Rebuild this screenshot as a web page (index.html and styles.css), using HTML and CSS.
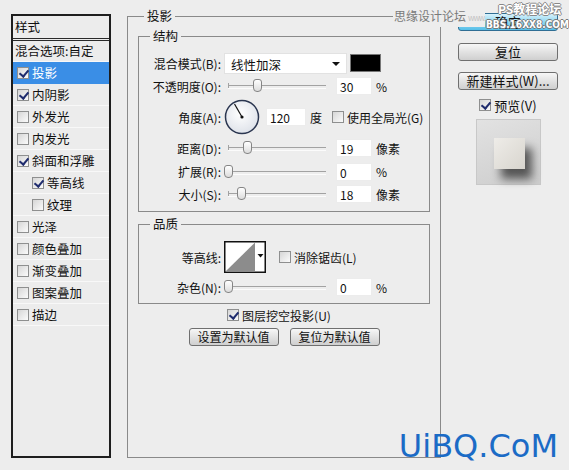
FILE: index.html
```html
<!DOCTYPE html>
<html>
<head>
    <meta charset="UTF-8" />
    <title>图层样式</title>
    <link rel="stylesheet" href="styles.css">
</head>
<body>
    <div class="dialog">
        <div class="styles-list">
            <div class="list-head">样式</div>
            <div class="list-blend">混合选项:自定</div>
            <div class="list-row active"><span class="cb on"></span>投影</div>
            <div class="list-row"><span class="cb on"></span>内阴影</div>
            <div class="list-row"><span class="cb"></span>外发光</div>
            <div class="list-row"><span class="cb"></span>内发光</div>
            <div class="list-row"><span class="cb on"></span>斜面和浮雕</div>
            <div class="list-row sub"><span class="cb on"></span>等高线</div>
            <div class="list-row sub"><span class="cb"></span>纹理</div>
            <div class="list-row"><span class="cb"></span>光泽</div>
            <div class="list-row"><span class="cb"></span>颜色叠加</div>
            <div class="list-row"><span class="cb"></span>渐变叠加</div>
            <div class="list-row"><span class="cb"></span>图案叠加</div>
            <div class="list-row"><span class="cb"></span>描边</div>
        </div>

        <fieldset class="effect">
            <legend>投影</legend>

            <fieldset class="group structure">
                <legend>结构</legend>
                <div class="row r1">
                    <span class="lbl">混合模式(B):</span>
                    <div class="select">线性加深<span class="arrow"></span></div>
                    <div class="swatch"></div>
                </div>
                <div class="row r2">
                    <span class="lbl">不透明度(O):</span>
                    <div class="slider"><span class="thumb" style="left: 29px"></span></div>
                    <div class="num">30</div>
                    <span class="unit">%</span>
                </div>
                <div class="row r3">
                    <span class="lbl">角度(A):</span>
                    <svg class="dial" width="36" height="36" viewBox="0 0 36 36">
                        <defs>
                            <radialGradient id="dialbg" cx="0.45" cy="0.4" r="0.6">
                                <stop offset="0" stop-color="#ffffff"/>
                                <stop offset="1" stop-color="#dfe3ea"/>
                            </radialGradient>
                        </defs>
                        <circle cx="18" cy="18" r="16.5" fill="url(#dialbg)" stroke="#2b3650" stroke-width="1.5"/>
                        <line x1="18" y1="18" x2="10.5" y2="5" stroke="#111" stroke-width="1.2"/>
                        <circle cx="18" cy="18" r="1.6" fill="#111"/>
                    </svg>
                    <div class="num angle">120</div>
                    <span class="unit">度</span>
                    <span class="cb global"></span>
                    <span class="opt">使用全局光(G)</span>
                </div>
                <div class="row r4">
                    <span class="lbl">距离(D):</span>
                    <div class="slider"><span class="thumb" style="left: 19px"></span></div>
                    <div class="num">19</div>
                    <span class="unit">像素</span>
                </div>
                <div class="row r5">
                    <span class="lbl">扩展(R):</span>
                    <div class="slider"><span class="thumb" style="left: 0px"></span></div>
                    <div class="num">0</div>
                    <span class="unit">%</span>
                </div>
                <div class="row r6">
                    <span class="lbl">大小(S):</span>
                    <div class="slider"><span class="thumb" style="left: 13px"></span></div>
                    <div class="num">18</div>
                    <span class="unit">像素</span>
                </div>
            </fieldset>

            <fieldset class="group quality">
                <legend>品质</legend>
                <div class="row q1">
                    <span class="lbl">等高线:</span>
                    <svg class="contour" width="42" height="32" viewBox="0 0 42 32">
                        <rect x="0.75" y="0.75" width="40.5" height="30.5" fill="#fff" stroke="#111" stroke-width="1.5"/>
                        <polygon points="1.5,30.5 31,1.5 31,30.5" fill="#8c8c8c"/>
                        <polygon points="33.5,13 39.5,13 36.5,16.5" fill="#111"/>
                    </svg>
                    <span class="cb anti"></span>
                    <span class="opt">消除锯齿(L)</span>
                </div>
                <div class="row q2">
                    <span class="lbl">杂色(N):</span>
                    <div class="slider"><span class="thumb" style="left: 0px"></span></div>
                    <div class="num">0</div>
                    <span class="unit">%</span>
                </div>
            </fieldset>

            <div class="knockout"><span class="cb on"></span><span class="opt">图层挖空投影(U)</span></div>
            <div class="defaults">
                <button class="btn">设置为默认值</button>
                <button class="btn">复位为默认值</button>
            </div>
        </fieldset>

        <div class="actions">
            <button class="btn big primary">确定</button>
            <button class="btn big">复位</button>
            <button class="btn big">新建样式(W)...</button>
            <div class="preview-check"><span class="cb on"></span><span class="opt">预览(V)</span></div>
            <div class="preview">
                <div class="preview-box"></div>
            </div>
        </div>

        <div class="wm-site">思缘设计论坛<span class="wm-www">www.</span></div>
        <div class="wm-ps">PS教程论坛</div>
        <div class="wm-bbs">BBS.16XX8.COM</div>
        <div class="wm-logo">UiBQ.CoM</div>
    </div>
</body>
</html>
```

FILE: styles.css
```css
* {
    margin: 0;
    padding: 0;
    box-sizing: border-box;
}
body {
    width: 569px;
    height: 470px;
    overflow: hidden;
    background-color: #ededed;
    font-family: "Noto Sans CJK SC", "Liberation Sans", sans-serif;
    font-size: 12px;
    color: #111;
}
.dialog {
    position: relative;
    display: flex;
    align-items: flex-start;
    height: 470px;
    padding-left: 11px;
}

/* left list */
.styles-list {
    width: 100px;
    height: 444px;
    margin-top: 14px;
    border: 2px solid #1e1e1e;
    background-color: #ececec;
}
.list-head {
    height: 25px;
    line-height: 22px;
    padding-left: 2px;
    border-bottom: 3px double #2a2a2a;
    font-size: 12.5px;
}
.list-blend {
    height: 21px;
    line-height: 20px;
    padding-left: 2px;
    font-size: 12.5px;
    border-bottom: 1px solid #f7f7f7;
}
.list-row {
    display: flex;
    align-items: center;
    height: 22px;
    padding-left: 4px;
    font-size: 12.5px;
    border-bottom: 1px solid #f8f8f8;
}
.list-row.sub {
    padding-left: 19px;
}
.list-row.active {
    background-color: #3a8ee6;
    color: #fff;
    border-bottom-color: #3a8ee6;
}
.list-row .cb {
    margin-right: 3px;
}

/* checkbox */
.cb {
    position: relative;
    display: inline-block;
    flex: none;
    width: 12px;
    height: 12px;
    border: 1px solid #8e8f8f;
    background: linear-gradient(135deg, #d6d6d6, #fbfbfb);
}
.cb.on::after {
    content: '';
    position: absolute;
    left: 3px;
    top: 0px;
    width: 4px;
    height: 7px;
    border: solid #1f2c6e;
    border-width: 0 2px 2px 0;
    transform: rotate(40deg);
}

/* group boxes */
fieldset {
    min-width: 0;
    border: 1px solid #8a8a8a;
}
legend {
    line-height: 16px;
    padding: 0 3px;
    font-size: 12.5px;
}
.effect {
    width: 314px;
    height: 450px;
    margin: 8px 0 0 16px;
    padding: 0 10px;
}
.effect > legend {
    margin-left: 6px;
}
.group {
    margin-top: 4px;
    padding: 0;
}
.group > legend {
    margin-left: 11px;
}
.structure {
    padding-top: 8px;
    padding-bottom: 6px;
}
.quality {
    padding-top: 8px;
    padding-bottom: 5px;
}

.row {
    display: flex;
    align-items: center;
}
.r1 { height: 22px; }
.r2 { height: 24px; }
.r3 { height: 38px; }
.r4 { height: 24px; }
.r5 { height: 23px; }
.r6 { height: 22px; }
.q1 { height: 34px; }
.q2 { height: 22px; margin-top: 2px; }

.lbl {
    width: 82px;
    margin-right: 3px;
    text-align: right;
    white-space: nowrap;
}
.select {
    position: relative;
    width: 123px;
    height: 21px;
    line-height: 21px;
    padding-left: 6px;
    background-color: #fff;
    border: 1px solid #e2e2e2;
    font-size: 12.5px;
}
.arrow {
    position: absolute;
    right: 6px;
    top: 8px;
    border-left: 4px solid transparent;
    border-right: 4px solid transparent;
    border-top: 4px solid #111;
}
.swatch {
    width: 31px;
    height: 18px;
    margin-left: 3px;
    background-color: #000;
    border: 1px solid #777;
}

.slider {
    position: relative;
    width: 102px;
    height: 14px;
}
.slider::before {
    content: '';
    position: absolute;
    left: 4px;
    right: 0;
    top: 6px;
    height: 2px;
    border-top: 1px solid #a2a2a2;
    border-bottom: 1px solid #fbfbfb;
}
.slider::after {
    content: '';
    position: absolute;
    left: 4px;
    top: 4px;
    width: 1px;
    height: 5px;
    background-color: #a2a2a2;
}
.thumb {
    position: absolute;
    top: 0;
    z-index: 1;
    width: 9px;
    height: 13px;
    border: 1px solid #858585;
    border-radius: 3px 3px 4px 4px;
    background: linear-gradient(#ffffff, #dcdcdc);
}
.num {
    width: 36px;
    height: 18px;
    line-height: 18px;
    margin-left: 10px;
    padding-left: 3px;
    background-color: #fff;
    border: 1px solid #ececec;
    font-size: 12px;
}
.num.angle {
    width: 40px;
    margin-left: 6px;
}
.unit {
    margin-left: 4px;
    font-size: 12px;
}
.cb.global {
    margin-left: 10px;
}
.opt {
    margin-left: 3px;
    font-size: 12px;
    white-space: nowrap;
}
.dial {
    flex: none;
}
.contour {
    flex: none;
}
.cb.anti {
    margin-left: 13px;
}

.knockout {
    display: flex;
    align-items: center;
    justify-content: center;
    height: 18px;
    margin-top: 2px;
    padding-right: 10px;
}
.defaults {
    display: flex;
    justify-content: center;
    gap: 11px;
    margin-top: 4px;
}
.btn {
    width: 90px;
    height: 18px;
    line-height: 16px;
    border: 1px solid #6f6f6f;
    border-radius: 3px;
    background: linear-gradient(#f7f7f7, #e2e2e2 50%, #cfcfcf);
    font-family: "Noto Sans CJK SC", "Liberation Sans", sans-serif;
    font-size: 12px;
    color: #111;
}

/* right column */
.actions {
    display: flex;
    flex-direction: column;
    align-items: center;
    width: 100px;
    margin-left: 17px;
    padding-top: 13px;
}
.btn.big {
    width: 100px;
    margin-bottom: 11px;
    font-size: 13px;
}
.btn.primary {
    margin-bottom: 12px;
    border-color: #2f6e94;
    background: linear-gradient(#d8f2fc, #8fd6f1 50%, #56bfe8);
}
.preview-check {
    display: flex;
    align-items: center;
    height: 14px;
    margin-top: -3px;
}
.preview-check .opt {
    font-size: 13px;
}
.preview {
    width: 65px;
    height: 66px;
    margin-top: 7px;
    padding: 18px 0 0 17px;
    border: 1px solid #c8c8c8;
    background: linear-gradient(160deg, #e2e2e2, #cdcdcd);
}
.preview-box {
    width: 31px;
    height: 31px;
    background: linear-gradient(135deg, #eeece8, #d8d5ce);
    box-shadow: 7px 10px 10px rgba(0, 0, 0, 0.6);
}

/* watermarks */
.wm-site {
    position: absolute;
    left: 393px;
    top: 7px;
    padding-left: 1px;
    line-height: 18px;
    background-color: #ededed;
    color: #7a7a7a;
    font-size: 12px;
}
.wm-www {
    margin-left: 2px;
    color: #c2c2c2;
    font-size: 8px;
    letter-spacing: -1px;
}
.wm-ps {
    position: absolute;
    left: 498px;
    top: 1px;
    color: #fff;
    font-size: 12px;
    font-weight: bold;
    line-height: 16px;
    text-shadow: 1px 0 #888, -1px 0 #888, 0 1px #888, 0 -1px #888;
}
.wm-bbs {
    position: absolute;
    left: 486px;
    top: 18px;
    color: #fff;
    font-family: "DejaVu Sans Condensed", "DejaVu Sans", sans-serif;
    font-size: 10px;
    font-weight: bold;
    line-height: 13px;
    text-shadow: 1px 0 #777, -1px 0 #777, 0 1px #777, 0 -1px #777;
}
.wm-logo {
    position: absolute;
    right: 11px;
    top: 426px;
    color: #1b6bc6;
    font-family: "DejaVu Sans", sans-serif;
    font-size: 32px;
    line-height: 40px;
}
```
